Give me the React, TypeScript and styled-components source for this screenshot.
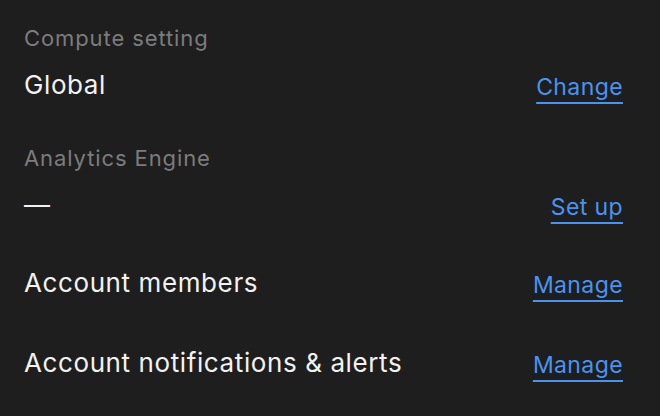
import styled, { createGlobalStyle } from "styled-components";

const Global = createGlobalStyle`
  html, body {
    margin: 0;
    background: #1e1e1e;
  }
  body {
    font-family: Inter, "Noto Sans", "Liberation Sans", sans-serif;
    -webkit-font-smoothing: antialiased;
  }
`;

const Page = styled.div`
  width: 660px;
  height: 416px;
  box-sizing: border-box;
  padding: 22px 37px 0 24px;
  background: #1e1e1e;
  display: flex;
  flex-direction: column;
`;

const Row = styled.div<{ $gap: number }>`
  display: flex;
  align-items: flex-end;
  justify-content: space-between;
  margin-bottom: ${({ $gap }) => $gap}px;
`;

const Info = styled.div`
  display: flex;
  flex-direction: column;
  gap: 14px;
`;

const Label = styled.span`
  font-size: 22px;
  line-height: 32px;
  letter-spacing: 0.9px;
  color: #7c7c7c;
`;

const Value = styled.span`
  font-size: 26px;
  line-height: 34px;
  letter-spacing: 0.6px;
  color: #f2f2f2;
`;

const Action = styled.a`
  font-size: 23px;
  line-height: 30px;
  letter-spacing: 0.4px;
  color: #4b93f1;
  text-decoration: underline;
  text-decoration-thickness: 2px;
  text-underline-offset: 7px;
  cursor: pointer;
`;

type Item = {
  label?: string;
  value: string;
  action: string;
  gap: number;
};

const items: Item[] = [
  { label: "Compute setting", value: "Global", action: "Change", gap: 40 },
  { label: "Analytics Engine", value: "—", action: "Set up", gap: 44 },
  { value: "Account members", action: "Manage", gap: 46 },
  { value: "Account notifications & alerts", action: "Manage", gap: 0 },
];

export default function App() {
  return (
    <>
      <Global />
      <Page>
        {items.map((it) => (
          <Row key={it.value} $gap={it.gap}>
            <Info>
              {it.label && <Label>{it.label}</Label>}
              <Value>{it.value}</Value>
            </Info>
            <Action>{it.action}</Action>
          </Row>
        ))}
      </Page>
    </>
  );
}
